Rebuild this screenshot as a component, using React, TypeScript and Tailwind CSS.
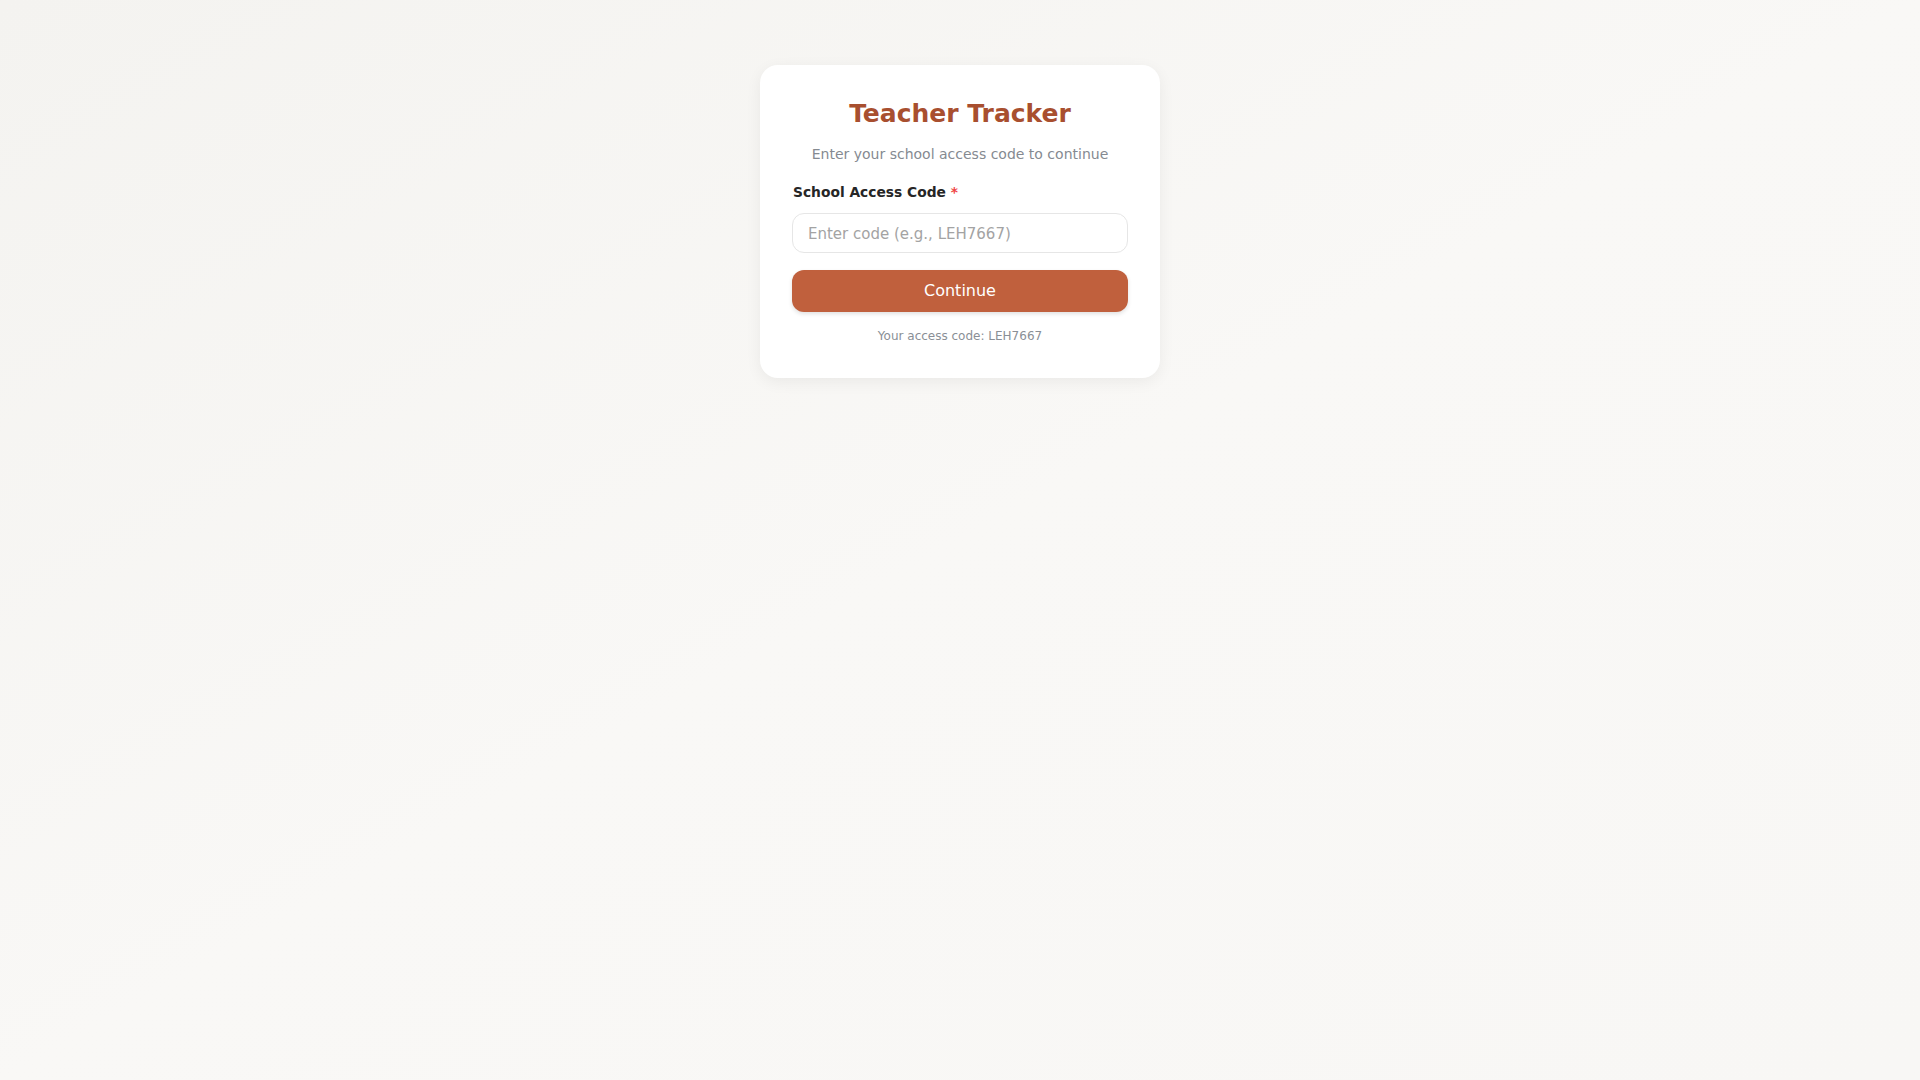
export default function App() {
  return (
    <div className="min-h-screen w-full bg-gradient-to-br from-[#f4f3f0] via-[#f9f8f6] to-[#f8f7f5] font-['DejaVu_Sans',sans-serif]">
      <div className="flex justify-center pt-[65px]">
        <div className="w-[400px] rounded-[18px] bg-white p-8 pb-[34px] shadow-[0_4px_16px_rgba(0,0,0,0.06)]">
          <h1 className="pt-px text-center text-[25px] font-bold leading-8 text-[#a84f2f]">
            Teacher Tracker
          </h1>
          <p className="mt-[14px] text-center text-sm leading-5 text-[#858a91]">
            Enter your school access code to continue
          </p>
          <label className="mt-[18px] block pl-px text-[13.8px] font-bold leading-5 text-[#262626]">
            School Access Code <span className="text-[#ef4444]">*</span>
          </label>
          <input
            type="text"
            placeholder="Enter code (e.g., LEH7667)"
            className="mt-[11px] block h-10 w-full rounded-xl border border-[#e6e6e6] px-[15px] pt-px text-[15px] text-[#222] outline-none placeholder:text-[#a3a3a3]"
          />
          <button className="mt-[17px] block h-[42px] w-full rounded-xl bg-[#c0603d] text-base text-white shadow-[0_2px_4px_rgba(0,0,0,0.12)]">
            Continue
          </button>
          <p className="mt-4 text-center text-xs leading-4 text-[#8a8f96]">
            Your access code: LEH7667
          </p>
        </div>
      </div>
    </div>
  );
}
